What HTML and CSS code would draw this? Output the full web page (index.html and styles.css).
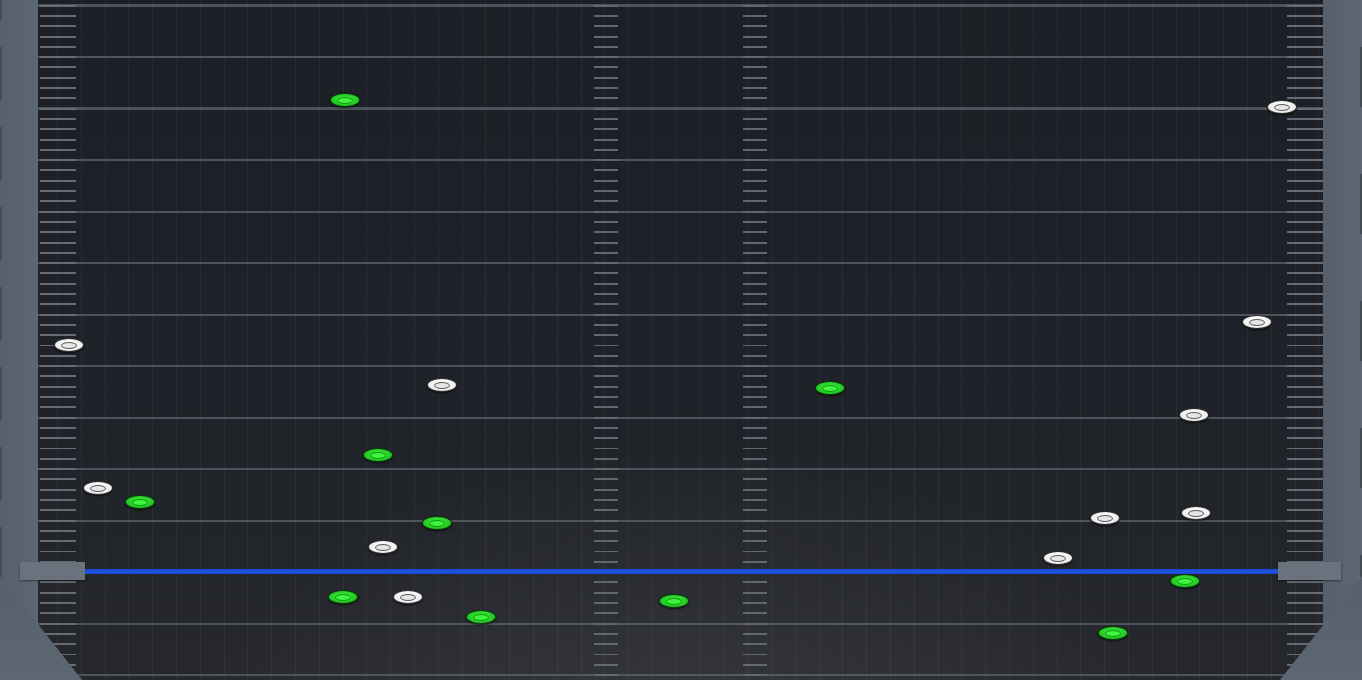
FILE: index.html
```html
<!DOCTYPE html>
<html>
<head>
<meta charset="utf-8">
<link rel="stylesheet" href="styles.css">
</head>
<body>
<div class="stage">
  <div class="pillar pillar-left"></div>
  <div class="canvas">
    <div class="glow"></div>
    <div class="dot green" style="left:307px;top:100px"></div>
    <div class="dot green" style="left:792px;top:388px"></div>
    <div class="dot green" style="left:340px;top:455px"></div>
    <div class="dot green" style="left:102px;top:502px"></div>
    <div class="dot green" style="left:399px;top:523px"></div>
    <div class="dot green" style="left:305px;top:597px"></div>
    <div class="dot green" style="left:443px;top:617px"></div>
    <div class="dot green" style="left:636px;top:601px"></div>
    <div class="dot green" style="left:1147px;top:581px"></div>
    <div class="dot green" style="left:1075px;top:633px"></div>
    <div class="dot white" style="left:1244px;top:107px"></div>
    <div class="dot white" style="left:31px;top:345px"></div>
    <div class="dot white" style="left:1219px;top:322px"></div>
    <div class="dot white" style="left:404px;top:385px"></div>
    <div class="dot white" style="left:1156px;top:415px"></div>
    <div class="dot white" style="left:60px;top:488px"></div>
    <div class="dot white" style="left:1067px;top:518px"></div>
    <div class="dot white" style="left:1158px;top:513px"></div>
    <div class="dot white" style="left:345px;top:547px"></div>
    <div class="dot white" style="left:1020px;top:558px"></div>
    <div class="dot white" style="left:370px;top:597px"></div>
  </div>
  <div class="pillar pillar-right"></div>
  <div class="corner corner-left"></div>
  <div class="corner corner-right"></div>
  <div class="cap cap-left"></div>
  <div class="cap cap-right"></div>
  <div class="bar"></div>
</div>
</body>
</html>
```

FILE: styles.css
```css
html, body {
  margin: 0;
  padding: 0;
  background: #1d2026;
  overflow: hidden;
}

.stage {
  position: relative;
  width: 1362px;
  height: 680px;
  display: flex;
  overflow: hidden;
  font-family: "Liberation Sans", sans-serif;
}

.pillar {
  flex: none;
  height: 100%;
  background-color: #5b6572;
}

.pillar-left {
  width: 38px;
  background-image:
    repeating-linear-gradient(to bottom, #434a54 0 20px, transparent 20px 47px, #434a54 47px 80px),
    linear-gradient(to right, #56606c, #5d6774);
  background-size: 2px 100%, 100% 100%;
  background-repeat: no-repeat;
}

.pillar-right {
  width: 39px;
  background-image:
    repeating-linear-gradient(to bottom, transparent 0 47px, #434a54 47px 107px, transparent 107px 127px),
    linear-gradient(to right, #56606c, #5d6774);
  background-size: 2px 100%, 100% 100%;
  background-position: right 0 top 0, 0 0;
  background-repeat: no-repeat;
}

.canvas {
  position: relative;
  flex: 1;
  height: 100%;
  overflow: hidden;
  background-color: #1d2026;
  background-image:
    repeating-linear-gradient(to bottom, transparent 0 4.6px, #666c75 4.6px 6.6px, transparent 6.6px 10.3px),
    repeating-linear-gradient(to bottom, transparent 0 4.6px, #61676f 4.6px 6.6px, transparent 6.6px 10.3px),
    repeating-linear-gradient(to bottom, transparent 0 4.6px, #61676f 4.6px 6.6px, transparent 6.6px 10.3px),
    repeating-linear-gradient(to bottom, transparent 0 4.6px, #666c75 4.6px 6.6px, transparent 6.6px 10.3px),
    repeating-linear-gradient(to bottom, transparent 0 4.5px, #4d545e 4.5px 6.8px, transparent 6.8px 51.5px),
    repeating-linear-gradient(to right, transparent 0 19px, rgba(255,255,255,0.05) 19px 20px, transparent 20px 23.8px),
    linear-gradient(to bottom, #1c1f25 0%, #1f2228 60%, #26282d 100%);
  background-size:
    36px 100%,
    24px 100%,
    24px 100%,
    36px 100%,
    100% 100%,
    100% 100%,
    100% 100%;
  background-position:
    2px 0,
    556px 0,
    705px 0,
    1249px 0,
    0 0,
    0 0,
    0 0;
  background-repeat: no-repeat;
}

.glow {
  position: absolute;
  left: 150px;
  right: 150px;
  bottom: -140px;
  height: 360px;
  background: radial-gradient(ellipse at 50% 100%, rgba(120,120,125,0.26) 0%, rgba(100,100,105,0.1) 50%, transparent 75%);
  pointer-events: none;
}

.dot {
  position: absolute;
  width: 30px;
  height: 14px;
  margin: -7px 0 0 -15px;
  border-radius: 50%;
  box-sizing: border-box;
}

.dot::after {
  content: "";
  position: absolute;
  left: 6px;
  top: 2.5px;
  width: 16px;
  height: 7px;
  border-radius: 50%;
  box-sizing: border-box;
}

.green {
  background: radial-gradient(ellipse at 50% 45%, #45f045 0%, #22c822 68%, #0c7e0c 100%);
  border: 1px solid #083f08;
  box-shadow: 0 1px 2px rgba(0,0,0,0.7);
}

.green::after {
  background: #3ff43f;
  border: 1.5px solid #139913;
}

.white {
  background: radial-gradient(ellipse at 50% 40%, #ffffff 0%, #efefef 65%, #9a9a9a 100%);
  border: 1px solid #303030;
  box-shadow: 0 1px 2px rgba(0,0,0,0.7);
}

.white::after {
  background: #e6e6e6;
  border: 1.5px solid #5e5e5e;
}

.corner {
  position: absolute;
  bottom: 0;
  width: 82px;
  height: 104px;
  background: linear-gradient(to bottom, #56606b, #5d6773);
}

.corner-left {
  left: 0;
  clip-path: polygon(0 0, 100% 100%, 0 100%);
}

.corner-right {
  right: 0;
  clip-path: polygon(100% 0, 100% 100%, 0 100%);
}

.cap {
  position: absolute;
  top: 562px;
  height: 18px;
  background: #69727d;
  box-shadow: 0 1px 2px rgba(0,0,0,0.45);
}

.cap-left {
  left: 20px;
  width: 65px;
}

.cap-right {
  left: 1278px;
  width: 63px;
}

.bar {
  position: absolute;
  left: 85px;
  top: 569px;
  width: 1193px;
  height: 5px;
  background: linear-gradient(to bottom, #1a46c9, #1f55e6 50%, #1a46c9);
}
```
